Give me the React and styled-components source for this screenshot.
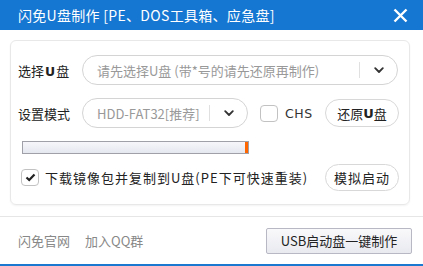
import React, {useState} from "react";
import styled, {createGlobalStyle} from "styled-components";

const Global = createGlobalStyle`
    body {
        margin: 0;
        font-family: "Noto Sans CJK SC", "Noto Sans", sans-serif;
        background: #fff;
    }
`

const Chevron = ({size = 10}) => (
    <svg width={size} height={size * 0.65} viewBox="0 0 10 6.5">
        <path d="M1.2 1.2 L5 5 L8.8 1.2" fill="none" stroke="#333" strokeWidth="1.8" strokeLinecap="round" strokeLinejoin="round" />
    </svg>
)

const App = () => {

    const [chs, setChs] = useState(false);
    const [download, setDownload] = useState(true);

    return (
        <Window>
            <Global />
            <TitleBar>
                <Title>闪免U盘制作 [PE、DOS工具箱、应急盘]</Title>
                <Close>
                    <svg width="15" height="15" viewBox="0 0 15 15">
                        <path d="M1.5 1.5 L13.5 13.5 M13.5 1.5 L1.5 13.5" stroke="#fff" strokeWidth="2.4" />
                    </svg>
                </Close>
            </TitleBar>
            <Body>
                <Card>
                    <Row>
                        <Label>选择<b>U</b>盘</Label>
                        <Pill width="316px">
                            <PillText>请先选择U盘 (带*号的请先还原再制作)</PillText>
                            <Arrow><Chevron /></Arrow>
                        </Pill>
                    </Row>
                    <Row>
                        <Label>设置模式</Label>
                        <Pill width="166px">
                            <PillText>HDD-FAT32[推荐]</PillText>
                            <Arrow><Chevron /></Arrow>
                        </Pill>
                        <Check onClick={() => setChs(!chs)}>
                            <Box checked={chs}>{chs && <Tick />}</Box>
                            <CheckText>CHS</CheckText>
                        </Check>
                        <RoundButton>还原<b>U</b>盘</RoundButton>
                    </Row>
                    <Progress>
                        <Fill />
                    </Progress>
                    <Row small>
                        <Check onClick={() => setDownload(!download)}>
                            <Box checked={download}>{download && <Tick />}</Box>
                            <LongText>下载镜像包并复制到U盘(PE下可快速重装)</LongText>
                        </Check>
                        <RoundButton small>模拟启动</RoundButton>
                    </Row>
                </Card>
            </Body>
            <Footer>
                <Link>闪免官网</Link>
                <Link>加入QQ群</Link>
                <MakeButton>USB启动盘一键制作</MakeButton>
            </Footer>
        </Window>
    )
}

const Tick = () => (
    <svg width="11" height="9" viewBox="0 0 11 9">
        <path d="M1.5 4.5 L4.2 7 L9.5 1.5" fill="none" stroke="#222" strokeWidth="2.2" />
    </svg>
)

export default App;

const Window = styled.div`
    width: 423px;
    height: 266px;
    box-sizing: border-box;
    display: flex;
    flex-direction: column;
    border-bottom: 2px solid #1a78d0;
    background: #fff;
`

const TitleBar = styled.div`
    height: 30px;
    background: #1677d2;
    display: flex;
    align-items: center;
    justify-content: space-between;
    padding: 0 15px 0 18px;
`

const Title = styled.div`
    color: #fff;
    font-size: 14px;
    letter-spacing: 0.3px;
`

const Close = styled.div`
    display: flex;
    cursor: pointer;
`

const Body = styled.div`
    padding: 10px 13px 11px 10px;
    border-bottom: 1px solid #e6e6e6;
`

const Card = styled.div`
    height: 165px;
    box-sizing: border-box;
    border: 1px solid #e8e8e8;
    border-radius: 6px;
    box-shadow: 0 1px 2px rgba(0, 0, 0, 0.05);
    padding: 14px 10px 0 7px;
    display: flex;
    flex-direction: column;
`

const Row = styled.div`
    display: flex;
    align-items: center;
    height: ${p => p.small ? "27px" : "30px"};
    margin-bottom: ${p => p.small ? "0" : "13px"};
`

const Label = styled.div`
    width: 64px;
    font-size: 13px;
    color: #222;

    b {
        font-family: "DejaVu Sans", sans-serif;
        font-weight: bold;
        font-size: 12.5px;
        margin: 0 1px;
    }
`

const Pill = styled.div`
    width: ${p => p.width};
    height: 30px;
    box-sizing: border-box;
    border: 1px solid #d4d4d4;
    border-radius: 15px;
    display: flex;
    align-items: center;
    padding-left: 14px;
`

const PillText = styled.div`
    flex: 1;
    font-size: 13px;
    color: #999;
    white-space: nowrap;
    overflow: hidden;
`

const Arrow = styled.div`
    width: 37px;
    height: 16px;
    border-left: 1px solid #e0e0e0;
    display: flex;
    align-items: center;
    justify-content: center;
`

const Check = styled.div`
    display: flex;
    align-items: center;
    cursor: pointer;
    margin-left: 12px;

    &:first-child {
        margin-left: 3px;
    }
`

const Box = styled.div`
    width: 18px;
    height: 17px;
    box-sizing: border-box;
    border: 1px solid #c2c2c2;
    border-radius: 4px;
    display: flex;
    align-items: center;
    justify-content: center;
    background: #fff;
`

const CheckText = styled.div`
    margin-left: 7px;
    font-family: "DejaVu Sans", sans-serif;
    font-size: 12.5px;
    letter-spacing: 0.5px;
    color: #333;
`

const LongText = styled.div`
    margin-left: 6px;
    font-size: 13px;
    letter-spacing: 1px;
    color: #222;
    white-space: nowrap;
`

const RoundButton = styled.div`
    margin-left: auto;
    width: 74px;
    height: ${p => p.small ? "27px" : "28px"};
    box-sizing: border-box;
    border: 1px solid #d8d8d8;
    border-radius: 14px;
    display: flex;
    align-items: center;
    justify-content: center;
    font-size: 13px;
    letter-spacing: ${p => p.small ? "1px" : "0"};
    color: #222;
    cursor: pointer;

    b {
        font-family: "DejaVu Sans", sans-serif;
        font-weight: bold;
    }
`

const Progress = styled.div`
    width: 227px;
    height: 13px;
    box-sizing: border-box;
    margin: 0 0 10px 4px;
    border: 1px solid #a0a0a8;
    background: linear-gradient(#f6f6fa, #e6e8f0);
    display: flex;
    justify-content: flex-end;
`

const Fill = styled.div`
    width: 3px;
    background: #ff6600;
`

const Footer = styled.div`
    flex: 1;
    display: flex;
    align-items: center;
    padding: 0 11px 0 18px;
    gap: 15px;
`

const Link = styled.div`
    font-size: 13px;
    color: #888;
    cursor: pointer;
`

const MakeButton = styled.div`
    margin-left: auto;
    width: 146px;
    height: 26px;
    box-sizing: border-box;
    border: 1px solid #b8b8c4;
    border-radius: 2px;
    background: linear-gradient(#f9f9fb, #e9eaf0);
    display: flex;
    align-items: center;
    justify-content: center;
    font-size: 13px;
    color: #222;
    cursor: pointer;
`
